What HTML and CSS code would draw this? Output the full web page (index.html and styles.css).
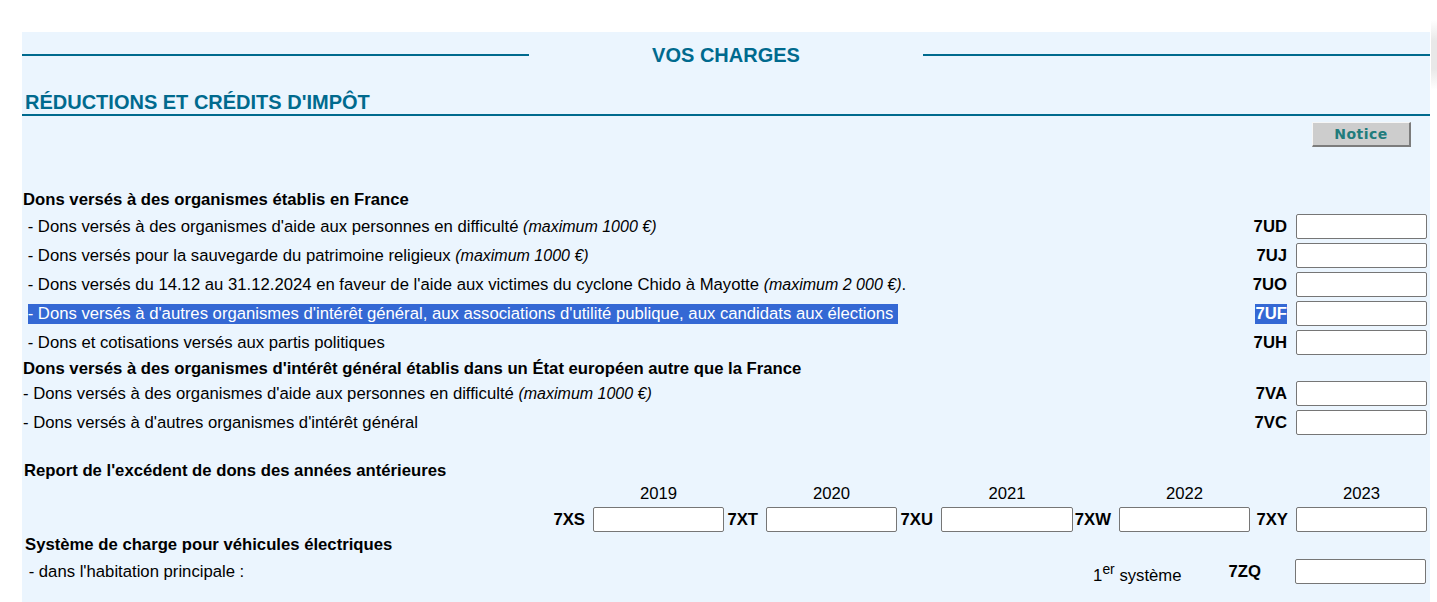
FILE: index.html
```html
<!DOCTYPE html>
<html lang="fr">
<head>
<meta charset="utf-8">
<title>Vos charges</title>
<link rel="stylesheet" href="styles.css">
</head>
<body>
<div class="edge-shadow"></div>
<div class="page">
  <div class="panel">
    <div class="title-row">
      <div class="rule"></div>
      <div class="title">VOS CHARGES</div>
      <div class="rule"></div>
    </div>

    <h2 class="section-head">RÉDUCTIONS ET CRÉDITS D'IMPÔT</h2>

    <div class="notice-row">
      <button class="notice" type="button">Notice</button>
    </div>

    <div class="ghead ghead-first">Dons versés à des organismes établis en France</div>
    <div class="row">
      <div class="label">&nbsp;- Dons versés à des organismes d'aide aux personnes en difficulté <i>(maximum 1000 €)</i></div>
      <div class="code">7UD</div>
      <input class="field" type="text">
    </div>
    <div class="row">
      <div class="label">&nbsp;- Dons versés pour la sauvegarde du patrimoine religieux <i>(maximum 1000 €)</i></div>
      <div class="code">7UJ</div>
      <input class="field" type="text">
    </div>
    <div class="row">
      <div class="label">&nbsp;- Dons versés du 14.12 au 31.12.2024 en faveur de l'aide aux victimes du cyclone Chido à Mayotte <i>(maximum 2 000 €)</i>.</div>
      <div class="code">7UO</div>
      <input class="field" type="text">
    </div>
    <div class="row">
      <div class="label">&nbsp;<span class="sel">- Dons versés à d'autres organismes d'intérêt général, aux associations d'utilité publique, aux candidats aux élections&nbsp;</span></div>
      <div class="code"><span class="sel">7UF</span></div>
      <input class="field" type="text">
    </div>
    <div class="row">
      <div class="label">&nbsp;- Dons et cotisations versés aux partis politiques</div>
      <div class="code">7UH</div>
      <input class="field" type="text">
    </div>

    <div class="ghead ghead-second">Dons versés à des organismes d'intérêt général établis dans un État européen autre que la France</div>
    <div class="row">
      <div class="label">- Dons versés à des organismes d'aide aux personnes en difficulté <i>(maximum 1000 €)</i></div>
      <div class="code">7VA</div>
      <input class="field" type="text">
    </div>
    <div class="row">
      <div class="label">- Dons versés à d'autres organismes d'intérêt général</div>
      <div class="code">7VC</div>
      <input class="field" type="text">
    </div>

    <div class="ghead ghead-report">Report de l'excédent de dons des années antérieures</div>
    <div class="years years-labels">
      <div></div><div class="year">2019</div>
      <div></div><div class="year">2020</div>
      <div></div><div class="year">2021</div>
      <div></div><div class="year">2022</div>
      <div></div><div class="year">2023</div>
    </div>
    <div class="years years-fields">
      <div class="ycode">7XS</div><input class="field" type="text">
      <div class="ycode">7XT</div><input class="field" type="text">
      <div class="ycode">7XU</div><input class="field" type="text">
      <div class="ycode">7XW</div><input class="field" type="text">
      <div class="ycode">7XY</div><input class="field" type="text">
    </div>

    <div class="ghead ghead-sys">Système de charge pour véhicules électriques</div>
    <div class="row-sys">
      <div class="label">&nbsp;- dans l'habitation principale :</div>
      <div class="sys">1<sup>er</sup> système</div>
      <div class="code-zq">7ZQ</div>
      <input class="field" type="text">
    </div>
  </div>
</div>
</body>
</html>
```

FILE: styles.css
```css
html, body {
  margin: 0;
  padding: 0;
  background: #ffffff;
}

body {
  font-family: "Liberation Sans", Arial, sans-serif;
  font-size: 16.7px;
  line-height: 19px;
  color: #000000;
}

.edge-shadow {
  position: absolute;
  top: 20px;
  right: 0;
  width: 6px;
  height: 70px;
  background: linear-gradient(#ffffff, #e8e8e8 30%, #e8e8e8 70%, #ffffff);
}

.page {
  padding: 32px 7px 0 22px;
}

.panel {
  background: #ebf5fe;
  min-height: calc(100vh - 32px);
  padding-top: 12px;
  box-sizing: border-box;
}

/* Title */
.title-row {
  display: grid;
  grid-template-columns: 1fr 394px 1fr;
  align-items: center;
  height: 22px;
}

.rule {
  height: 2px;
  background: #006a8e;
}

.title {
  text-align: center;
  font-size: 20px;
  line-height: 22px;
  font-weight: bold;
  color: #006a8e;
}

.section-head {
  margin: 25px 0 0 0;
  padding: 0 0 1px 3px;
  font-size: 20px;
  line-height: 22px;
  font-weight: bold;
  color: #006a8e;
  border-bottom: 2px solid #006a8e;
}

/* Notice button */
.notice-row {
  display: flex;
  justify-content: flex-end;
  margin-top: 6px;
  padding-right: 19px;
}

.notice {
  width: 99px;
  height: 25px;
  box-sizing: border-box;
  margin: 0;
  padding: 0;
  background: #cdcdcd;
  border-style: solid;
  border-width: 1px 2px 2px 1px;
  border-color: #f6f6f6 #7c7c7c #7c7c7c #f6f6f6;
  font-family: "DejaVu Sans", Verdana, sans-serif;
  font-size: 14px;
  font-weight: bold;
  letter-spacing: 0.5px;
  color: #217c7c;
}

/* Group headers */
.ghead {
  font-weight: bold;
  padding-left: 1px;
  white-space: nowrap;
}

.ghead-first {
  margin-top: 41px;
  padding-top: 2px;
  margin-bottom: 3px;
}

.ghead-second {
  padding-top: 2px;
  padding-bottom: 1px;
}

.ghead-report {
  margin-top: 24px;
  padding-left: 2px;
}

.ghead-sys {
  margin-top: 3px;
  padding-left: 3px;
}

/* Rows */
.row {
  display: grid;
  grid-template-columns: 1fr auto 131px;
  align-items: center;
  height: 29px;
  padding: 0 3px 0 1px;
}

.label {
  white-space: nowrap;
}

.label i {
  font-size: 16px;
}

.code {
  font-weight: bold;
  text-align: right;
  padding-right: 9px;
}

.field {
  display: block;
  box-sizing: border-box;
  width: 100%;
  height: 25px;
  margin: 0;
  padding: 0 3px;
  background: #ffffff;
  border: 1px solid #767676;
  border-radius: 2px;
  font: inherit;
}

.sel {
  background: #3468d4;
  color: #ffffff;
  padding-bottom: 1px;
}

/* Years table */
.years {
  display: grid;
  grid-template-columns: 1fr 131px 42px 131px 44px 132px 46px 131px 46px 131px;
  align-items: center;
  padding-right: 3px;
}

.years-labels {
  margin-top: 4px;
}

.year {
  text-align: center;
}

.years-fields {
  margin-top: 4px;
  height: 25px;
}

.ycode {
  font-weight: bold;
  text-align: right;
  padding-right: 8px;
}

/* Electric charge row */
.row-sys {
  display: flex;
  align-items: center;
  height: 29px;
  margin-top: 3px;
  padding: 0 4px 0 1px;
}

.row-sys .label {
  flex: 1;
  padding-left: 1px;
}

.sys {
  white-space: nowrap;
  padding-top: 1px;
}

.code-zq {
  font-weight: bold;
  margin-left: 47px;
}

.row-sys .field {
  width: 131px;
  margin-left: 34px;
}
```
